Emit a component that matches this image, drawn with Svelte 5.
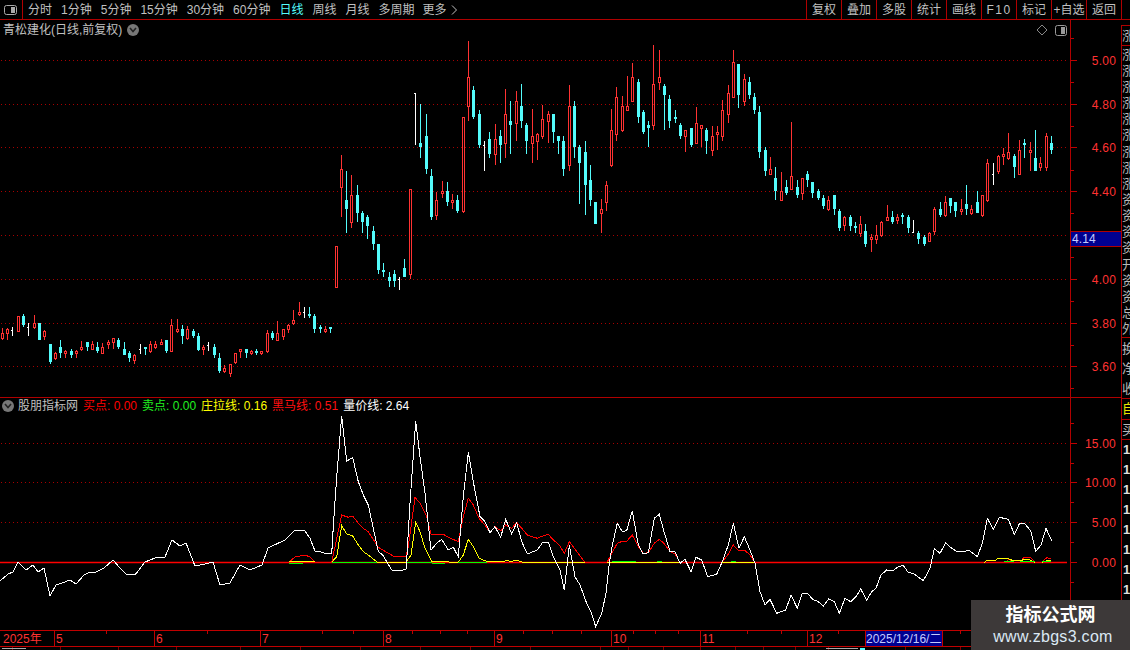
<script>
  const leftTabs = ['分时','1分钟','5分钟','15分钟','30分钟','60分钟','日线','周线','月线','多周期'];
  const rightBtns = ['复权','叠加','多股','统计','画线','F10','标记','+自选','返回'];
  // [type, bodyTop, bodyBottom, high, low]; doji: ['w', high, low, tick]
  const raw = [
  ['r',333,339,328,340],['r',329,334,328,340],['w',327,336,330],['r',316,332,316,332],['c',316,325,314,327],['w',323,336,327],['r',323,328,315,329],['c',323,340,323,340],['r',331,337,330,340],['c',344,362,344,364],
  ['r',353,359,352,360],['c',347,353,340,358],['r',351,354,350,358],['c',351,355,349,358],['r',351,354,350,358],['r',347,350,341,351],['c',342,347,342,351],['r',344,350,341,350],['c',347,351,342,353],['r',347,354,343,354],
  ['r',342,345,340,349],['r',338,343,338,349],['c',340,347,338,349],['c',349,355,342,355],['c',353,358,351,362],['r',355,361,354,364],['w',344,354,349],['c',347,349,347,355],['r',344,352,341,353],['r',344,348,341,349],
  ['r',342,345,339,345],['c',340,351,340,353],['r',325,352,319,352],['r',329,332,319,333],['c',329,336,325,344],['r',329,339,326,340],['c',331,336,329,338],['c',336,350,333,351],['r',347,350,345,355],['w',342,351,345],
  ['c',347,355,344,358],['c',358,371,353,373],['r',368,372,365,373],['r',364,374,364,377],['r',353,363,353,364],['r',349,352,349,358],['c',349,353,349,358],['r',351,354,350,355],['c',351,353,349,355],['r',351,354,351,355],
  ['r',333,352,330,353],['c',333,338,331,340],['r',333,341,321,341],['r',329,337,329,340],['r',325,330,324,333],['r',320,324,310,325],['r',312,315,302,316],['w',307,318,312],['c',314,316,307,318],['c',316,329,314,333],
  ['c',327,329,325,333],['r',329,332,326,333],['c',327,329,327,333],
  ['r',246,288,246,288],['r',169,188,155,217],['c',200,209,171,233],['r',195,223,175,228],['c',195,213,185,222],['c',213,222,211,233],['c',217,226,215,239],['c',231,244,226,250],['c',244,270,244,274],['c',270,272,263,277],
  ['c',277,281,272,287],['c',274,281,270,287],['w',277,290,279],['c',268,277,259,277],['r',189,275,189,279],['w',93,145,93],['c',143,147,104,158],['c',136,169,114,174],['c',176,217,169,220],['r',200,216,192,220],
  ['r',191,194,181,198],['c',191,202,182,206],['r',200,203,194,209],['c',200,211,195,213],['r',117,212,117,213],['r',77,107,41,121],['c',90,117,86,119],['c',114,145,110,148],['w',141,171,145],['c',139,154,132,158],
  ['r',139,155,124,165],['c',136,145,130,163],['r',114,144,89,158],['c',121,125,101,154],['r',101,124,91,141],['c',106,121,84,128],['c',125,141,123,154],['r',136,144,109,163],['r',134,142,133,160],['r',119,137,105,139],
  ['r',114,122,111,143],['c',114,132,114,143],['c',136,141,136,154],['c',141,169,136,176],['r',106,166,85,171],['c',106,147,101,158],['c',147,163,145,204],['c',152,185,141,215],['c',180,200,165,206],['c',202,224,202,224],
  ['r',209,214,199,233],['r',185,203,181,211],['r',130,166,109,167],['r',97,135,87,141],['r',106,131,96,132],['r',106,111,76,111],['r',77,102,63,102],['c',82,117,79,123],['c',112,132,110,134],['c',125,128,121,147],
  ['r',84,126,45,130],['r',77,83,50,90],['c',86,95,84,130],['c',99,121,95,128],['c',117,119,110,123],['c',125,136,123,139],['r',130,137,130,152],['c',128,145,128,147],['r',123,144,107,144],['r',125,129,125,147],
  ['c',130,141,128,154],['r',136,151,126,156],['r',132,135,126,150],['r',110,137,100,141],['r',93,115,85,123],['r',62,98,50,98],['c',64,95,64,108],['r',79,102,74,106],['c',82,95,77,99],['c',97,110,93,114],
  ['c',112,152,106,158],['c',150,171,147,176],['r',169,175,157,175],['c',178,191,167,200],['r',191,201,172,201],['c',187,193,180,195],['r',176,190,122,190],['c',187,195,180,198],['r',178,194,178,200],['c',174,180,171,187],
  ['c',182,193,182,198],['c',191,198,189,200],['c',198,206,195,209],['r',200,210,196,211],['c',195,209,195,215],['c',211,228,209,231],['r',217,226,216,231],['c',217,226,215,231],['c',226,228,222,233],['r',224,234,216,237],
  ['c',231,244,224,247],['r',237,240,234,252],['r',235,240,225,244],['r',222,236,221,237],['r',217,221,205,221],['c',217,222,211,224],['r',217,221,214,224],['c',215,217,213,224],['c',217,228,215,233],['w',220,233,232],
  ['c',233,239,231,244],['c',237,244,235,246],['r',233,242,232,242],['r',209,232,207,235],['c',209,215,202,217],['r',202,216,196,217],['c',198,206,198,213],['c',202,211,202,217],['r',209,212,199,215],['c',204,209,185,215],
  ['r',209,214,205,215],['c',202,213,191,213],['r',195,216,195,217],['r',163,201,159,202],['w',163,185,174],['r',156,172,155,174],['r',154,157,148,165],['r',152,159,133,160],['c',156,167,154,178],['r',150,175,140,175],
  ['c',143,145,139,158],['r',150,153,142,171],['c',158,171,130,171],['r',163,168,157,171],['r',136,168,133,171],['c',143,150,136,154]
  ];
  const candles = raw.map((c, i) => ({ c, x: Math.floor(2.33 + 5.298 * i) }));

  const pts = (arr) => arr.map(p => p.join(',')).join(' ');
  const zm = (arr, ox, oy) => arr.map(([a, b]) => [+(ox + a / 3).toFixed(1), +(oy + b / 3).toFixed(1)]);

  const white = [
    [0,581],[8,574],[13,572],[18,562],[26,570],[33,565],[38,572],[44,568],[50,596],[56,585],[62,583],[70,580],[76,584],[84,575],[90,572],[96,572],[104,568],[113,560],[120,568],[126,574],[135,575],[145,562],[155,558],[165,557],[172,540],[180,546],[186,543],[195,566],[205,564],[213,562],[220,585],[230,583],[240,565],[250,570],[262,565],[268,548],[285,540],[295,530],
    ...zm([[0,360],[15,363],[30,385],[45,423],[60,425],[75,430],[95,432],[100,350],[110,200],[125,18],[140,153],[158,143],[175,215],[190,255],[205,285],[235,425],[248,435],[262,458],[275,480],[300,482],[318,478],[320,450],[330,280],[347,33],[360,140],[375,250],[393,420],[410,400],[425,388],[445,420],[460,412],[475,440],[490,260],[505,127],[520,215],[540,320],[555,335],[570,368],[585,350],[602,382],[617,328],[635,372],[650,338],[665,395],[682,432],[712,420],[728,397],[745,397],[760,440],[780,480],[793,540],[808,405],[825,500],[840,525],[860,580],[873,605],[887,650]],300,410),
    ...zm([[35,400],[48,340],[58,250],[68,190],[82,130],[97,155],[110,152],[127,92],[145,195],[160,222],[175,218],[193,115],[208,103],[222,155],[240,215],[255,215],[270,250],[285,238],[303,275],[318,232],[335,240],[353,290],[380,283],[397,245],[415,195],[430,130],[447,205],[463,170],[480,210],[495,250],[510,335],[525,375],[540,358],[560,400],[587,390],[603,345],[622,385],[637,340],[652,340],[668,358],[685,365],[700,378],[716,357],[733,365],[748,400],[765,355],[782,365],[798,350],[812,327],[830,360],[845,335],[858,325],[873,285]],590,480),
    ...zm([[20,210],[37,213],[55,200],[70,196],[85,218],[100,220],[130,242],[150,205],[163,146],[180,160],[197,128],[215,145],[232,155],[268,152],[292,170],[307,130],[322,55],[340,88],[358,52],[385,58],[403,103],[418,72],[433,70],[452,92],[467,154],[483,135],[498,85],[515,122]],880,500)
  ];
  const reds = [
    [[289,562],[295,557],[300,556],[305,555],[310,557],[315,562]],
    zm([[95,457],[105,410],[125,315],[145,322],[158,318],[175,340],[190,355],[205,365],[235,412],[260,427],[280,438],[318,438],[325,410],[345,262],[360,280],[380,320],[393,372],[410,375],[428,372],[445,382],[475,395],[490,320],[505,265],[520,285],[537,325],[555,345],[570,368],[585,350],[602,362],[617,345],[635,355],[650,338],[665,355],[682,375],[712,385],[728,378],[745,373],[760,390],[778,405],[793,430],[808,395],[855,457]],300,410),
    zm([[52,245],[68,215],[82,190],[97,184],[110,184],[127,165],[145,200],[160,220],[175,218],[193,190],[208,178],[222,190],[240,215],[255,222],[270,247]],590,480),
    zm([[397,247],[415,222],[430,195],[447,213],[463,210],[480,225],[495,247]],590,480),
    zm([[375,187],[388,178],[400,187]],880,500),
    zm([[420,187],[432,172],[450,172],[465,187]],880,500),
    zm([[485,187],[500,173],[512,176]],880,500)
  ];
  const yellows = [
    [[289,561],[310,561],[315,562]],
    zm([[95,457],[110,440],[125,347],[140,372],[158,378],[175,405],[190,425],[205,435],[232,457],[318,457],[333,435],[347,337],[360,365],[375,415],[395,453],[435,453],[450,457],[475,457],[490,435],[505,388],[520,410],[537,445],[555,452],[565,456],[575,454],[595,454],[605,456],[617,452],[635,454],[650,451],[665,456],[680,457],[855,457]],300,410),
    zm([[52,247],[270,247]],590,480),
    zm([[397,247],[495,247]],590,480),
    zm([[313,187],[320,182],[345,182],[352,176],[385,176],[400,182],[420,182],[435,178],[450,180],[465,187]],880,500),
    zm([[485,187],[500,182],[512,183]],880,500)
  ];
  const greensUnder = [[289,303,562],[432,445,562]];
  const greensOver = [[332,377,562],[407,432,562],[458,487,562],[612,636,561],[657,662,561],[731,736,561],[1004,1014,561],[1020,1035,561],[1042,1051,561]];

  const priceGrid = [60,104,147,191,235,279,323,366];
  const priceLabels = [['5.00',60],['4.80',104],['4.60',147],['4.40',191],['4.00',279],['3.80',323],['3.60',366]];
  const priceMinor = [38,82,126,170,213,257,301,345,388];
  const lowGrid = [443,482,522];
  const lowLabels = [['15.00',443],['10.00',482],['5.00',522],['0.00',562]];
  const lowMinor = [423,463,502,542,582,602,622];
  const months = [[54,'5'],[154,'6'],[260,'7'],[383,'8'],[494,'9'],[611,'10'],[700,'11'],[807,'12']];
  const dateTicks = [106,207,322,353,412,440,467,523,552,581,633,655,678,747,781,838,905,960,1020];
  const bottomTicks = [12,60,118,176,240,300,360,420,470,530,600,628,663,700,735,763,795,828,905,960];
  const stripTop = ['涨','涨','涨','涨','涨','涨','涨','涨','涨','资','资','资','资','开','资','资','总','外'];
</script>

<div class="app">
  <header class="toolbar">
    <div class="layout-btn">
      <svg width="13" height="10" viewBox="0 0 13 10"><rect x="0.5" y="0.5" width="12" height="9" rx="2" fill="none" stroke="#aaa"/><rect x="7" y="2" width="4" height="6" fill="#aaa"/></svg>
    </div>
    <nav class="tabs">
      {#each leftTabs as t}
        <span class:active={t === '日线'}>{t}</span>
      {/each}
      <span class="more">更多 <svg width="7" height="10" viewBox="0 0 7 10"><path d="M1 0.5 L5.5 5 L1 9.5" fill="none" stroke="#c0c0c0"/></svg></span>
    </nav>
    <div class="buttons">
      {#each rightBtns as b}
        <span class="btn" class:wide={b === 'F10'}>{b}</span>
      {/each}
    </div>
  </header>

  <div class="workspace">
    <div class="panes">
      <section class="pane price">
        <div class="chart">
          <div class="title">青松建化(日线,前复权) <i class="round"><svg width="8" height="6" viewBox="0 0 8 6"><path d="M1 1 L4 4.5 L7 1" fill="none" stroke="#222" stroke-width="1.6"/></svg></i></div>
          <svg class="plot" width="1070" height="377" viewBox="0 20 1070 377">
            {#each priceGrid as y}
              <line x1="1" x2="1067" y1={y + 0.5} y2={y + 0.5} class="grid" />
            {/each}
            <g shape-rendering="crispEdges">
              {#each candles as { c, x }}
                {#if c[0] === 'w'}
                  <rect x={x} y={c[1]} width="1" height={c[2] - c[1]} fill="#fff" />
                  <rect x={x - 1} y={c[3]} width="1" height="1" fill="#fff" />
                {:else if c[0] === 'c'}
                  <rect x={x} y={c[3]} width="1" height={c[4] - c[3]} fill="#54fcfc" />
                  <rect x={x - 1} y={c[1]} width="3" height={c[2] - c[1]} fill="#54fcfc" />
                {:else}
                  <rect x={x} y={c[3]} width="1" height={Math.max(0, c[1] - c[3])} fill="#ff3232" />
                  <rect x={x} y={c[2]} width="1" height={Math.max(0, c[4] - c[2])} fill="#ff3232" />
                  <rect x={x - 0.5} y={c[1] + 0.5} width="2" height={c[2] - c[1] - 1} fill="none" stroke="#ff3232" />
                {/if}
              {/each}
            </g>
            <path d="M1042 25 L1047 30 L1042 35 L1037 30 Z" fill="none" stroke="#888" />
            <rect x="1055.5" y="25.5" width="11" height="10" rx="2" fill="none" stroke="#999" />
            <rect x="1061" y="27" width="4" height="7" fill="#999" />
          </svg>
        </div>
        <svg class="axis" width="50" height="377" viewBox="1071 20 50 377">
          {#each priceGrid as y}
            <rect x="1071" y={y} width="6" height="1" fill="#c00000" />
          {/each}
          {#each priceMinor as y}
            <rect x="1071" y={y} width="3" height="1" fill="#c00000" />
          {/each}
          {#each priceLabels as [t, y]}
            <text x="1116" y={y + 5} class="tick">{t}</text>
          {/each}
          <rect x="1071" y="231.5" width="50" height="15" fill="#000090" />
          <line x1="1071" x2="1121" y1="231.5" y2="231.5" stroke="#b00000" />
          <line x1="1071" x2="1121" y1="246.5" y2="246.5" stroke="#b00000" />
          <text x="1072" y="243" class="cur">4.14</text>
        </svg>
      </section>

      <section class="pane lower">
        <div class="chart">
          <div class="legend">
            <i class="round"><svg width="8" height="6" viewBox="0 0 8 6"><path d="M1 1 L4 4.5 L7 1" fill="none" stroke="#222" stroke-width="1.6"/></svg></i>
            <span class="name">股朋指标网</span>
            <span class="l-red">买点: 0.00</span>
            <span class="l-green">卖点: 0.00</span>
            <span class="l-yellow">庄拉线: 0.16</span>
            <span class="l-red2">黑马线: 0.51</span>
            <span class="l-white">量价线: 2.64</span>
          </div>
          <svg class="plot" width="1070" height="232" viewBox="0 398 1070 232">
            {#each lowGrid as y}
              <line x1="1" x2="1067" y1={y + 0.5} y2={y + 0.5} class="grid" />
            {/each}
            <line x1="0" x2="1067" y1="562.5" y2="562.5" stroke="#ff0000" stroke-width="1.4" />
            <g fill="none" shape-rendering="crispEdges">
              {#each greensUnder as [a, b, y]}
                <line x1={a} x2={b} y1={y + 1.5} y2={y + 1.5} stroke="#00ff00" />
              {/each}
              {#each reds as r}
                <polyline points={pts(r)} stroke="#ff0000" />
              {/each}
              {#each yellows as r}
                <polyline points={pts(r)} stroke="#ffff00" />
              {/each}
              {#each greensOver as [a, b, y]}
                <line x1={a} x2={b} y1={y + 0.5} y2={y + 0.5} stroke="#00ff00" />
              {/each}
              <polyline points={pts(white)} stroke="#ffffff" />
            </g>
          </svg>
        </div>
        <svg class="axis" width="50" height="232" viewBox="1071 398 50 232">
          {#each [...lowGrid, 562] as y}
            <rect x="1071" y={y} width="6" height="1" fill="#c00000" />
          {/each}
          {#each lowMinor as y}
            <rect x="1071" y={y} width="3" height="1" fill="#c00000" />
          {/each}
          {#each lowLabels as [t, y]}
            <text x="1116" y={y + 5} class="tick">{t}</text>
          {/each}
        </svg>
      </section>
    </div>

    <aside class="strip">
      <div class="s-head">涨</div>
      <div class="s-list">
        {#each stripTop as s}<span>{s}</span>{/each}
      </div>
      <div class="s-list second">
        <span>换</span><span>净</span><span>收</span>
      </div>
      <div class="s-yellow">自</div>
      <div class="s-grey">买</div>
      <div class="s-nums">
        {#each Array(9) as _}<b>1</b>{/each}
      </div>
    </aside>
  </div>

  <footer class="dates">
    <svg width="1130" height="20" viewBox="0 630 1130 20">
      <g shape-rendering="crispEdges">
        <rect x="0" y="630" width="1130" height="1" fill="#c00000" />
        <rect x="0" y="646" width="1130" height="1" fill="#c00000" />
        {#each months as [x]}
          <rect x={x} y="630" width="1" height="17" fill="#c00000" />
        {/each}
        {#each dateTicks as x}
          <rect x={x} y="630" width="1" height="4" fill="#c00000" />
        {/each}
        {#each bottomTicks as x}
          <rect x={x} y="647" width="1" height="3" fill="#800000" />
        {/each}
        <rect x="860" y="648" width="5" height="2" fill="#54fcfc" />
        <rect x="2" y="648" width="24" height="1" fill="#aaa" />
        <rect x="826" y="648" width="32" height="1" fill="#aaa" />
        <rect x="1070" y="630" width="1" height="17" fill="#c00000" />
        <rect x="1121" y="630" width="1" height="17" fill="#c00000" />
        <rect x="865.5" y="630.5" width="77" height="16" fill="#000090" stroke="#c00000" />
      </g>
      <text x="3" y="643" class="dt">2025年</text>
      {#each months as [x, t]}
        <text x={x + 2} y="643" class="dt">{t}</text>
      {/each}
      <text x="866" y="643" class="cur date">2025/12/16/二</text>
    </svg>
  </footer>

  <div class="watermark">
    <strong>指标公式网</strong>
    <span>www.zbgs3.com</span>
  </div>
</div>

<style>
  :global(body) { margin: 0; background: #000; }
  .app {
    position: relative;
    width: 1130px;
    height: 650px;
    overflow: hidden;
    background: #000;
    color: #c0c0c0;
    font: 12px/1 "Liberation Sans", "Noto Sans CJK SC", sans-serif;
    display: flex;
    flex-direction: column;
  }
  svg { display: block; }
  .toolbar {
    height: 19px;
    border-bottom: 1px solid #b00000;
    display: flex;
    flex: none;
  }
  .layout-btn {
    width: 23px;
    border-right: 1px solid #b00000;
    display: flex;
    align-items: center;
    justify-content: center;
    padding-right: 1px;
    box-sizing: border-box;
  }
  .tabs {
    display: flex;
    align-items: center;
    gap: 9px;
    padding-left: 5px;
    flex: 1;
    white-space: nowrap;
  }
  .tabs .active { color: #54fcfc; }
  .more { display: inline-flex; align-items: center; gap: 4px; margin-left: -1px; }
  .buttons { display: flex; margin-right: 8px; }
  .btn {
    width: 35px;
    border-left: 1px solid #b00000;
    box-sizing: border-box;
    display: flex;
    align-items: center;
    justify-content: center;
    white-space: nowrap;
  }
  .btn:last-child { width: 36px; border-right: 1px solid #b00000; }
  .btn.wide { letter-spacing: 1.5px; }
  .workspace { display: flex; flex: none; height: 610px; }
  .panes { width: 1121px; flex: none; display: flex; flex-direction: column; }
  .pane { display: flex; flex: none; }
  .pane.price { height: 377px; border-bottom: 1px solid #b00000; }
  .pane.lower { height: 232px; }
  .chart { position: relative; width: 1070px; border-right: 1px solid #b00000; flex: none; }
  .title {
    position: absolute;
    left: 3px;
    top: 3px;
    display: flex;
    align-items: center;
    gap: 5px;
    height: 13px;
    white-space: nowrap;
  }
  .round {
    width: 12px;
    height: 12px;
    border-radius: 50%;
    background: #777;
    display: inline-flex;
    align-items: center;
    justify-content: center;
  }
  .legend {
    position: absolute;
    left: 2px;
    top: 1px;
    display: flex;
    align-items: center;
    height: 14px;
    white-space: nowrap;
    gap: 5px;
  }
  .legend .name { margin-left: -1px; }
  .l-red { color: #ff0000; }
  .l-green { color: #20f020; }
  .l-yellow { color: #ffff00; }
  .l-red2 { color: #ff1010; }
  .l-white { color: #ffffff; }
  .tick { fill: #ff3232; text-anchor: end; font-size: 12px; letter-spacing: 0.2px; }
  .cur { fill: #c4ccff; font-size: 12px; letter-spacing: 0.1px; }
  .cur.date { letter-spacing: 0; }
  .dt { fill: #ff3232; font-size: 12px; }
  .grid { stroke: #a80000; stroke-dasharray: 1 3; shape-rendering: crispEdges; }
  .strip {
    width: 9px;
    flex: none;
    border-left: 1px solid #b00000;
    box-sizing: border-box;
    margin-top: 5px;
    overflow: hidden;
    display: flex;
    flex-direction: column;
    color: #b8b8b8;
  }
  .strip span, .s-head, .s-yellow, .s-grey { width: 12px; font-size: 13px; white-space: nowrap; }
  .s-head {
    height: 19px;
    border-top: 1px solid #b00000;
    border-bottom: 1px solid #b00000;
    line-height: 19px;
    flex: none;
  }
  .s-list {
    height: 291px;
    display: flex;
    flex-direction: column;
    justify-content: space-around;
    flex: none;
  }
  .s-list.second {
    height: 60px;
    border-top: 1px solid #b00000;
    border-bottom: 1px solid #b00000;
    box-sizing: content-box;
  }
  .s-yellow { color: #e8e800; height: 20px; line-height: 20px; flex: none; }
  .s-grey { height: 19px; line-height: 19px; border-top: 1px solid #b00000; border-bottom: 1px solid #b00000; flex: none; }
  .s-nums { display: flex; flex-direction: column; gap: 6px; padding: 3px 0 0 1px; color: #ddd; }
  .s-nums b { font-size: 13px; line-height: 14px; }
  .dates { flex: none; height: 20px; }
  .watermark {
    position: absolute;
    left: 971px;
    top: 600px;
    width: 159px;
    height: 50px;
    background: #3d3939;
    display: flex;
    flex-direction: column;
    align-items: center;
    color: #fff;
    box-sizing: border-box;
    padding-top: 6px;
    gap: 4px;
  }
  .watermark strong { font-size: 18px; line-height: 18px; }
  .watermark span { font-size: 16px; line-height: 17px; color: #dbe8f4; letter-spacing: 0.3px; margin-left: 5px; }
</style>
